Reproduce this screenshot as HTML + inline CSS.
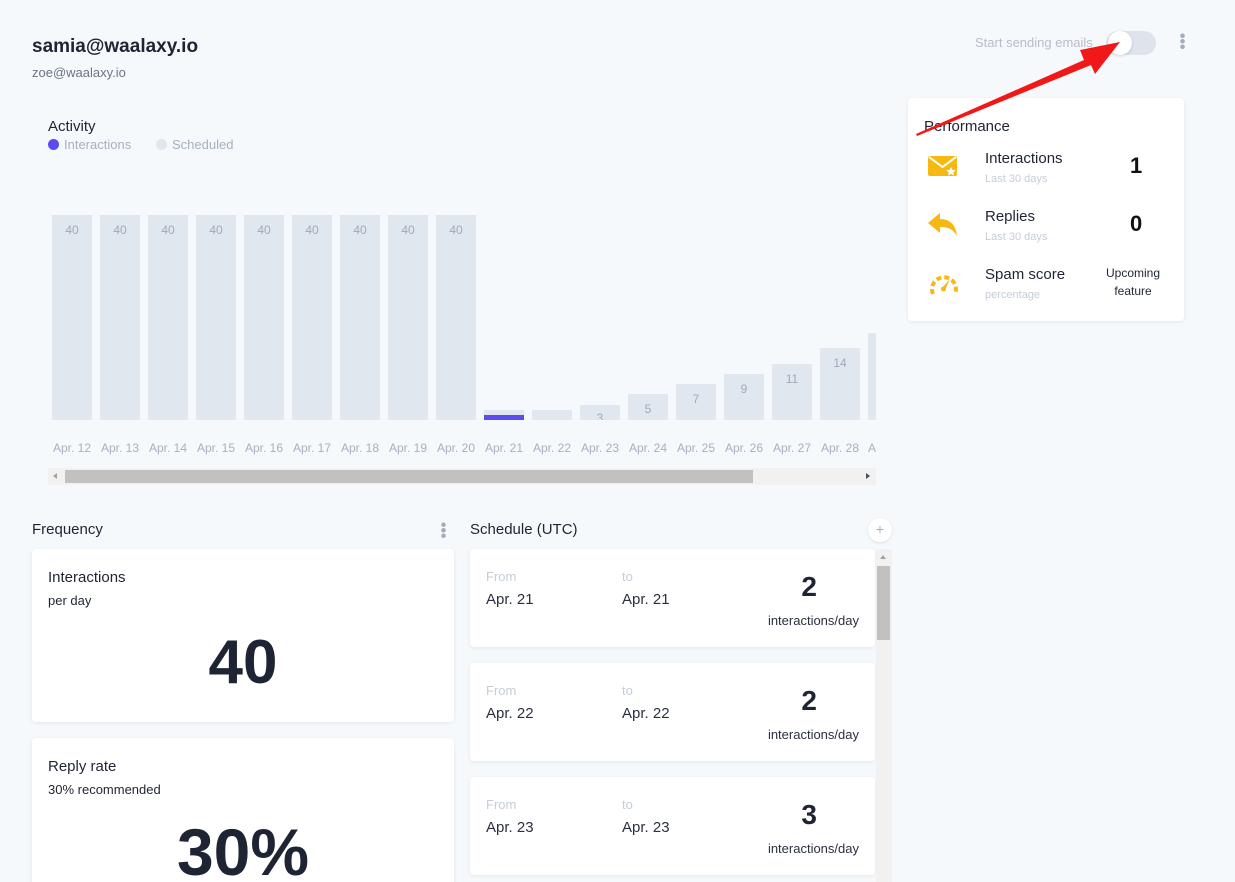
<!DOCTYPE html>
<html><head><style>
*{margin:0;padding:0;box-sizing:border-box}
html,body{width:1235px;height:882px;overflow:hidden}
body{background:#f6f9fc;font-family:"Liberation Sans",sans-serif;position:relative;color:#1e2433}
.a{position:absolute}
.bar{position:absolute;width:40px;background:#e1e7ef;bottom:462px;text-align:center;color:#a0a9b8;font-size:12px;padding-top:8px}
.lbl{position:absolute;top:441px;width:48px;text-align:center;font-size:12px;color:#a6b0c0}
.card{position:absolute;background:#fff;border-radius:4px;box-shadow:0 1px 4px rgba(0,0,0,.08)}
.sc .f{position:absolute;top:20px;font-size:13px;color:#c5cdd9}
.sc .d{position:absolute;top:42px;font-size:15px;color:#2b3040}
.sc .n{position:absolute;right:58px;top:22px;font-size:28px;font-weight:bold;color:#1e2433}
.sc .u{position:absolute;right:16px;top:64px;font-size:13px;color:#2b3040}
</style></head><body>
<div class="a" style="left:32px;top:36px;font-size:19px;font-weight:bold">samia@waalaxy.io</div>
<div class="a" style="left:32px;top:65px;font-size:13px;color:#6b7485">zoe@waalaxy.io</div>
<div class="a" style="left:975px;top:35px;font-size:13px;color:#b5bdc9">Start sending emails</div>
<div class="a" style="left:1106px;top:31px;width:50px;height:24px;border-radius:12px;background:#dfe4ec"></div>
<div class="a" style="left:1108px;top:31px;width:24px;height:24px;border-radius:12px;background:#fff;box-shadow:0 1px 3px rgba(0,0,0,.15)"></div>
<div class="a" style="left:1180px;top:33px;width:5px;height:16px;background:radial-gradient(circle,#a3acba 2px,transparent 2.5px) 0 0/5px 5.5px"></div>

<div class="a" style="left:48px;top:118px;font-size:15px">Activity</div>
<div class="a" style="left:48px;top:139px;width:11px;height:11px;border-radius:50%;background:#5b4cf0"></div>
<div class="a" style="left:64px;top:137px;font-size:13px;color:#a6b0c0">Interactions</div>
<div class="a" style="left:156px;top:139px;width:11px;height:11px;border-radius:50%;background:#e1e7ef"></div>
<div class="a" style="left:172px;top:137px;font-size:13px;color:#a6b0c0">Scheduled</div>

<div class="a" style="left:0;top:0;width:876px;height:882px;overflow:hidden">
<div class="bar" style="left:52px;height:205px">40</div>
<div class="bar" style="left:100px;height:205px">40</div>
<div class="bar" style="left:148px;height:205px">40</div>
<div class="bar" style="left:196px;height:205px">40</div>
<div class="bar" style="left:244px;height:205px">40</div>
<div class="bar" style="left:292px;height:205px">40</div>
<div class="bar" style="left:340px;height:205px">40</div>
<div class="bar" style="left:388px;height:205px">40</div>
<div class="bar" style="left:436px;height:205px">40</div>
<div class="bar" style="left:484px;height:10px;padding:0"><div style="position:absolute;bottom:0;width:40px;height:5px;background:#5b4cf0"></div></div>
<div class="bar" style="left:532px;height:10px;padding:0"></div>
<div class="bar" style="left:580px;height:15px;padding:0;overflow:hidden"><div style="margin-top:6px">3</div></div>
<div class="bar" style="left:628px;height:26px">5</div>
<div class="bar" style="left:676px;height:36px">7</div>
<div class="bar" style="left:724px;height:46px">9</div>
<div class="bar" style="left:772px;height:56px">11</div>
<div class="bar" style="left:820px;height:72px">14</div>
<div class="bar" style="left:868px;height:87px"></div>
<div class="lbl" style="left:48px">Apr. 12</div><div class="lbl" style="left:96px">Apr. 13</div><div class="lbl" style="left:144px">Apr. 14</div><div class="lbl" style="left:192px">Apr. 15</div><div class="lbl" style="left:240px">Apr. 16</div><div class="lbl" style="left:288px">Apr. 17</div><div class="lbl" style="left:336px">Apr. 18</div><div class="lbl" style="left:384px">Apr. 19</div><div class="lbl" style="left:432px">Apr. 20</div><div class="lbl" style="left:480px">Apr. 21</div><div class="lbl" style="left:528px">Apr. 22</div><div class="lbl" style="left:576px">Apr. 23</div><div class="lbl" style="left:624px">Apr. 24</div><div class="lbl" style="left:672px">Apr. 25</div><div class="lbl" style="left:720px">Apr. 26</div><div class="lbl" style="left:768px">Apr. 27</div><div class="lbl" style="left:816px">Apr. 28</div><div class="lbl" style="left:864px;text-align:left;padding-left:4px">Apr. 29</div>
</div>
<div class="a" style="left:48px;top:468px;width:828px;height:17px;background:#f1f1f1"></div>
<div class="a" style="left:65px;top:470px;width:688px;height:13px;background:#c1c1c1"></div>
<div class="a" style="left:53px;top:473px;width:0;height:0;border:3.5px solid transparent;border-right:4px solid #a3a3a3;border-left:0"></div>
<div class="a" style="left:866px;top:473px;width:0;height:0;border:3.5px solid transparent;border-left:4px solid #505050;border-right:0"></div>

<div class="card" style="left:908px;top:98px;width:276px;height:223px">
 <div class="a" style="left:16px;top:20px;font-size:15px">Performance</div>
 <svg class="a" style="left:20px;top:56px" width="30" height="24" viewBox="0 0 30 24"><rect x="0" y="2" width="29" height="20" rx="2" fill="#f6b911"/><path d="M1 3 L14.5 13 L28 3" stroke="#fff" stroke-width="2" fill="none"/><path d="M23 13l1.5 3 3.2.3-2.4 2.1.7 3.1-3-1.6-3 1.6.7-3.1-2.4-2.1 3.2-.3z" fill="#fff"/></svg>
 <div class="a" style="left:77px;top:52px;font-size:15px">Interactions</div>
 <div class="a" style="left:77px;top:75px;font-size:11px;color:#c5cdd9">Last 30 days</div>
 <div class="a" style="left:222px;top:55px;font-size:22px;font-weight:bold;color:#111">1</div>
 <svg class="a" style="left:20px;top:114px" width="30" height="26" viewBox="0 0 30 26"><path d="M0 11 L12 1 V7 C22 7 28 13 29 24 C25 17 20 15 12 15 V21 Z" fill="#f6b911"/></svg>
 <div class="a" style="left:77px;top:110px;font-size:15px">Replies</div>
 <div class="a" style="left:77px;top:133px;font-size:11px;color:#c5cdd9">Last 30 days</div>
 <div class="a" style="left:222px;top:113px;font-size:22px;font-weight:bold;color:#111">0</div>
 <svg class="a" style="left:20px;top:172px" width="32" height="26" viewBox="0 0 32 26"><path d="M5 24 A12 12 0 1 1 27 24" stroke="#f6b911" stroke-width="4" fill="none" stroke-dasharray="5 3"/><path d="M14 18 L22 9 L17 20 Z" fill="#f6b911"/><circle cx="15.5" cy="19" r="2.5" fill="#f6b911"/></svg>
 <div class="a" style="left:77px;top:168px;font-size:15px">Spam score</div>
 <div class="a" style="left:77px;top:191px;font-size:11px;color:#c5cdd9">percentage</div>
 <div class="a" style="left:198px;top:166px;font-size:12px;line-height:18px;text-align:center">Upcoming<br>feature</div>
</div>

<div class="a" style="left:32px;top:521px;font-size:15px">Frequency</div>
<div class="a" style="left:441px;top:522px;width:5px;height:16px;background:radial-gradient(circle,#a3acba 2px,transparent 2.5px) 0 0/5px 5.5px"></div>
<div class="card" style="left:32px;top:549px;width:422px;height:173px">
 <div class="a" style="left:16px;top:20px;font-size:15px">Interactions</div>
 <div class="a" style="left:16px;top:44px;font-size:13px">per day</div>
 <div class="a" style="left:0;width:422px;top:78px;text-align:center;font-size:62px;font-weight:bold">40</div>
</div>
<div class="card" style="left:32px;top:738px;width:422px;height:160px">
 <div class="a" style="left:16px;top:20px;font-size:15px">Reply rate</div>
 <div class="a" style="left:16px;top:44px;font-size:13px">30% recommended</div>
 <div class="a" style="left:0;width:422px;top:76px;text-align:center;font-size:66px;font-weight:bold">30%</div>
</div>

<div class="a" style="left:470px;top:521px;font-size:15px">Schedule (UTC)</div>
<div class="a" style="left:868px;top:518px;width:24px;height:24px;border-radius:50%;background:#fff;box-shadow:0 1px 3px rgba(0,0,0,.1);text-align:center;line-height:23px;color:#a6b0c0;font-size:14px">+</div>
<div class="card sc" style="left:470px;top:549px;width:405px;height:98px"><div class="f" style="left:16px">From</div><div class="f" style="left:152px">to</div><div class="d" style="left:16px">Apr. 21</div><div class="d" style="left:152px">Apr. 21</div><div class="n">2</div><div class="u">interactions/day</div></div>
<div class="card sc" style="left:470px;top:663px;width:405px;height:98px"><div class="f" style="left:16px">From</div><div class="f" style="left:152px">to</div><div class="d" style="left:16px">Apr. 22</div><div class="d" style="left:152px">Apr. 22</div><div class="n">2</div><div class="u">interactions/day</div></div>
<div class="card sc" style="left:470px;top:777px;width:405px;height:98px"><div class="f" style="left:16px">From</div><div class="f" style="left:152px">to</div><div class="d" style="left:16px">Apr. 23</div><div class="d" style="left:152px">Apr. 23</div><div class="n">3</div><div class="u">interactions/day</div></div>
<div class="a" style="left:876px;top:549px;width:16px;height:333px;background:#f1f1f1"></div>
<div class="a" style="left:877px;top:566px;width:13px;height:74px;background:#c1c1c1"></div>
<div class="a" style="left:880px;top:555px;width:0;height:0;border:3.5px solid transparent;border-bottom:4px solid #a3a3a3;border-top:0"></div>

<svg class="a" style="left:0;top:0" width="1235" height="882"><path d="M916 134 L1084 60 L1080 50 L1120 42 L1095 74 L1091 65 L917 136 Z" fill="#f01818"/></svg>
</body></html>
